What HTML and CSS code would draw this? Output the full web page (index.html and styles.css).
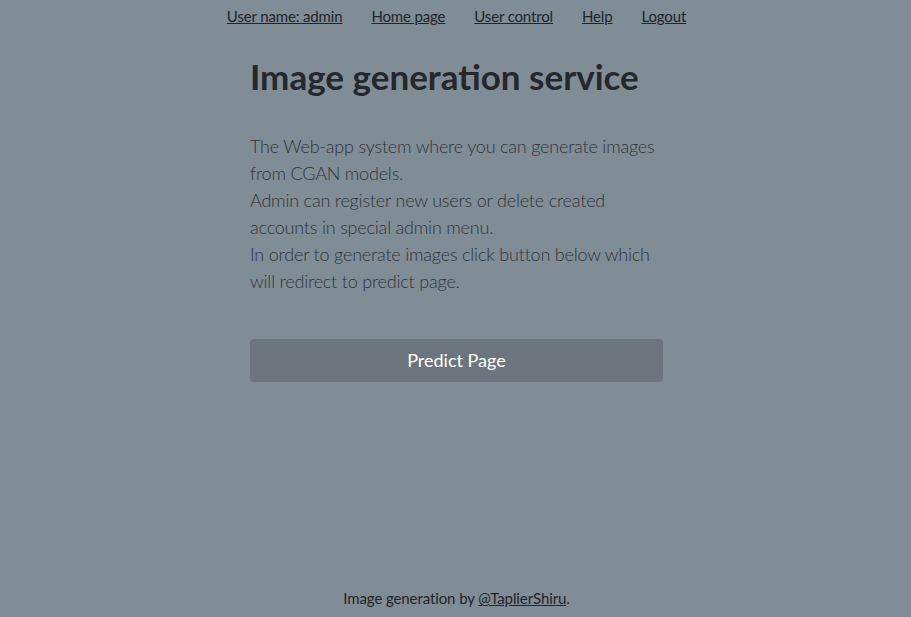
FILE: index.html
```html
<!DOCTYPE html>
<html lang="en">
<head>
<meta charset="utf-8">
<title>Image generation service</title>
<link rel="stylesheet" href="styles.css">
</head>
<body>
<div class="page">
  <nav class="topnav">
    <a href="#">User name: admin</a>
    <a href="#">Home page</a>
    <a href="#">User control</a>
    <a href="#">Help</a>
    <a href="#">Logout</a>
  </nav>
  <main class="content">
    <h1 class="title">Image generation service</h1>
    <p class="lead">The Web-app system where you can generate images from CGAN models.<br>Admin can register new users or delete created accounts in special admin menu.<br>In order to generate images click button below which will redirect to predict page.</p>
    <a class="btn" href="#">Predict Page</a>
  </main>
  <footer class="footer">Image generation by <a href="#">@TaplierShiru</a>.</footer>
</div>
</body>
</html>
```

FILE: styles.css
```css
html, body {
  margin: 0;
  padding: 0;
  height: 100%;
}
body {
  background: #808c96;
  color: #212529;
  font-family: "Lato", "Open Sans", sans-serif;
  font-size: 16px;
}
.page {
  height: 617px;
  display: flex;
  flex-direction: column;
  align-items: center;
}
.topnav {
  display: flex;
  gap: 29px;
  padding-top: 5px;
  padding-left: 2px;
  line-height: 22px;
  font-size: 15px;
  letter-spacing: -0.15px;
}
.topnav a, .footer a {
  color: #212529;
  text-decoration: underline;
}
.content {
  width: 413px;
  padding-top: 28px;
  margin-left: 2px;
  flex: 1;
}
.title {
  margin: 0 0 36px 0;
  font-size: 35px;
  font-weight: 700;
  line-height: 42px;
  color: #24282c;
}
.lead {
  margin: 0 0 44px 0;
  font-size: 18px;
  letter-spacing: -0.2px;
  font-weight: 300;
  line-height: 27px;
  color: #303438;
}
.btn {
  display: block;
  height: 43px;
  line-height: 43px;
  text-align: center;
  background: #6c757d;
  color: #fff;
  font-size: 18px;
  border-radius: 4px;
  text-decoration: none;
}
.footer {
  padding-bottom: 8px;
  padding-left: 2px;
  line-height: 22px;
  font-size: 15px;
  letter-spacing: -0.1px;
}
```
